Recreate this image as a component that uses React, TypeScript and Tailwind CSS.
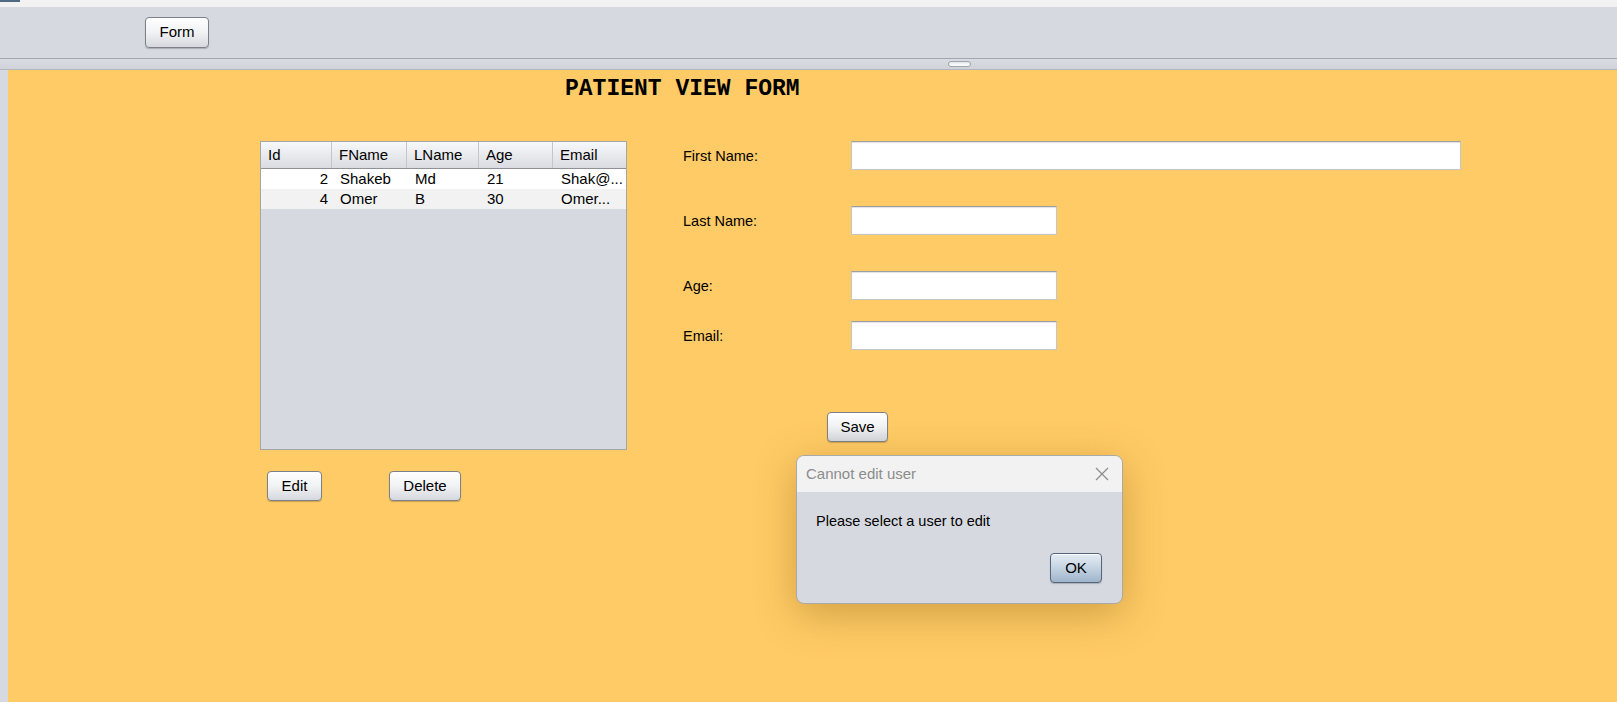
import React from "react";

const font = { fontFamily: '"Liberation Sans", Arial, sans-serif' };

function JButton({ label, className = "" }: { label: string; className?: string }) {
  return (
    <button
      className={
        "flex items-center justify-center rounded-[4px] border border-[#7d8086] bg-gradient-to-b from-[#ffffff] via-[#f1f2f4] to-[#d5d8de] text-[15px] text-black shadow-[inset_0_1px_0_#ffffff,0_1px_1px_rgba(0,0,0,0.2)] " +
        className
      }
    >
      {label}
    </button>
  );
}

function Field({ className = "" }: { className?: string }) {
  return (
    <div
      className={
        "h-[29px] border border-[#c5c6c9] border-t-[#9d9fa3] bg-white shadow-[inset_0_1px_1px_rgba(0,0,0,0.12)] " +
        className
      }
    />
  );
}

const cols = [
  { name: "Id", w: "w-[71px]" },
  { name: "FName", w: "w-[75px]" },
  { name: "LName", w: "w-[72px]" },
  { name: "Age", w: "w-[74px]" },
  { name: "Email", w: "w-[73px]" },
];

const rows = [
  ["2", "Shakeb", "Md", "21", "Shak@..."],
  ["4", "Omer", "B", "30", "Omer..."],
];

export default function App() {
  return (
    <div className="flex h-[702px] w-[1617px] flex-col overflow-hidden bg-[#d6d9e0]" style={font}>
      {/* top strip */}
      <div className="h-[7px] bg-[#f2f2f2]">
        <div className="h-[2px] w-[20px] bg-[#4f6a82]" />
      </div>
      {/* toolbar */}
      <div className="h-[51px] pl-[145px] pt-[10px]">
        <JButton label="Form" className="h-[31px] w-[64px]" />
      </div>
      <div className="h-px bg-[#a3a6ad]" />
      {/* splitter */}
      <div className="flex h-[10px] items-center bg-gradient-to-b from-[#d9dce2] to-[#cfd2d9] pl-[948px]">
        <div className="h-[6px] w-[23px] rounded-full border border-[#9ea2a9] bg-gradient-to-b from-[#e6e8ec] to-[#ffffff]" />
      </div>
      <div className="h-px bg-[#b3b6bd]" />
      {/* main */}
      <div className="flex flex-1">
        <div className="w-[8px] bg-[#d6d9e0]" />
        <div className="relative flex-1 bg-[#ffcb66]">
          <div
            className="pl-[557px] pt-[6px] text-[23px] font-bold leading-[26px] text-black"
            style={{ fontFamily: '"Liberation Mono", "Courier New", monospace' }}
          >
            PATIENT VIEW FORM
          </div>

          <div className="mt-[39px] flex">
            {/* left column */}
            <div className="ml-[252px] flex w-[367px] flex-col">
              <div className="flex h-[309px] flex-col border border-[#a4a6aa] bg-[#d6d9e0]">
                <div className="flex h-[27px] border-b border-[#8e9196] bg-gradient-to-b from-[#f7f8fa] to-[#dadce1]">
                  {cols.map((c, i) => (
                    <div
                      key={c.name}
                      className={
                        c.w +
                        " flex items-center pl-[7px] text-[15px] text-black " +
                        (i < cols.length - 1 ? "border-r border-[#c3c5ca]" : "")
                      }
                    >
                      {c.name}
                    </div>
                  ))}
                </div>
                {rows.map((r, ri) => (
                  <div
                    key={ri}
                    className={"flex h-[20px] items-center " + (ri === 0 ? "bg-white" : "bg-[#f2f2f2]")}
                  >
                    {r.map((v, ci) => (
                      <div
                        key={ci}
                        className={
                          cols[ci].w +
                          " text-[15px] leading-[20px] text-black " +
                          (ci === 0 ? "pr-[4px] text-right" : "pl-[8px]")
                        }
                      >
                        {v}
                      </div>
                    ))}
                  </div>
                ))}
              </div>
              <div className="mt-[21px] flex">
                <JButton label="Edit" className="ml-[7px] h-[30px] w-[55px]" />
                <JButton label="Delete" className="ml-[67px] h-[30px] w-[72px]" />
              </div>
            </div>

            {/* form column */}
            <div className="ml-[56px] flex flex-col">
              <div className="flex items-center">
                <div className="w-[168px] pt-[2px] text-[14.5px] text-black">First Name:</div>
                <Field className="w-[610px]" />
              </div>
              <div className="mt-[36px] flex items-center">
                <div className="w-[168px] pt-[2px] text-[14.5px] text-black">Last Name:</div>
                <Field className="w-[206px]" />
              </div>
              <div className="mt-[36px] flex items-center">
                <div className="w-[168px] pt-[2px] text-[14.5px] text-black">Age:</div>
                <Field className="w-[206px]" />
              </div>
              <div className="mt-[21px] flex items-center">
                <div className="w-[168px] pt-[2px] text-[14.5px] text-black">Email:</div>
                <Field className="w-[206px]" />
              </div>
              <div className="mt-[62px] pl-[144px]">
                <JButton label="Save" className="h-[30px] w-[61px]" />
              </div>
            </div>
          </div>

          {/* dialog */}
          <div className="absolute left-[788px] top-[385px] flex h-[149px] w-[327px] flex-col overflow-hidden rounded-[8px] border border-[#a9a9a9] bg-[#d6d9e0] shadow-[0_10px_40px_rgba(120,80,0,0.35)]">
            <div className="flex h-[36px] items-center justify-between bg-[#f2f2f2] pl-[9px] pr-[13px]">
              <span className="text-[15px] text-[#8c8c8c]">Cannot edit user</span>
              <svg width="14" height="14" viewBox="0 0 14 14">
                <path d="M1 1 L13 13 M13 1 L1 13" stroke="#8c8c8c" strokeWidth="1.2" fill="none" />
              </svg>
            </div>
            <div className="pl-[19px] pt-[19px] text-[14.5px] text-black">Please select a user to edit</div>
            <div className="mt-auto flex justify-end pb-[20px] pr-[20px]">
              <button className="flex h-[30px] w-[52px] items-center justify-center rounded-[4px] border border-[#55667a] bg-gradient-to-b from-[#e6edf5] via-[#c4d3e2] to-[#9fb5cb] text-[15px] text-black shadow-[inset_0_1px_0_#ffffff,0_1px_1px_rgba(0,0,0,0.2)]">
                OK
              </button>
            </div>
          </div>
        </div>
      </div>
    </div>
  );
}
